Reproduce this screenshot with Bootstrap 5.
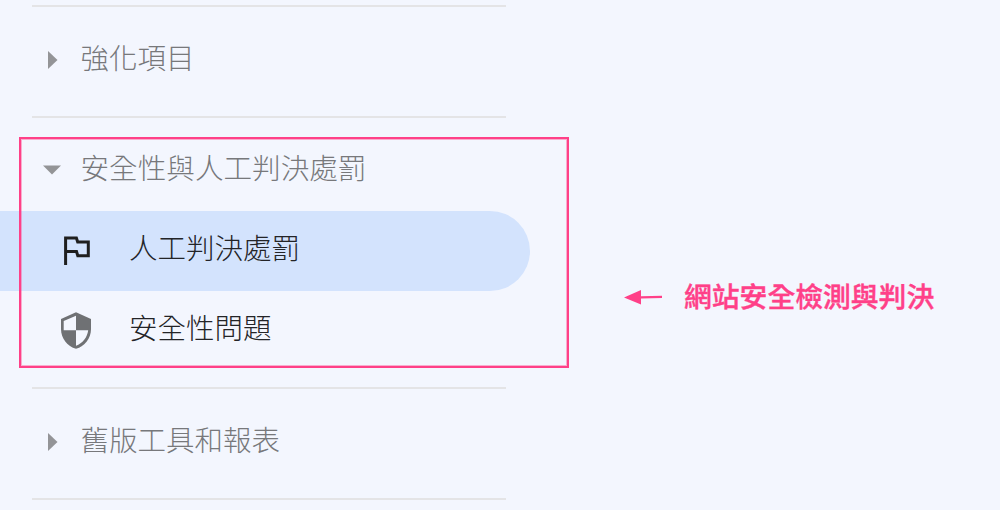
<!DOCTYPE html>
<html lang="zh-Hant">
<head>
  <meta charset="UTF-8" />
  <meta name="viewport" content="width=device-width, initial-scale=1" />
  <title>安全性與人工判決處罰</title>
  <link href="https://cdn.jsdelivr.net/npm/bootstrap@5.3.0/dist/css/bootstrap.min.css" rel="stylesheet">
  <style>
    body {
      font-family: "Noto Sans CJK TC", sans-serif;
      height: 510px;
      overflow: hidden;
      background-color: #f3f6fe;
    }

    .side-menu {
      width: 530px;
      padding-top: 5px;
      font-size: 28.5px;
      font-weight: 300;
      line-height: 42px;
    }

    .menu-divider {
      width: 474px;
      height: 2px;
      margin-left: 32px;
      background-color: #e4e4e6;
    }

    .menu-head {
      height: 109px;
      padding: 32px 0 35px 45px;
      color: #77787b;
    }

    .menu-head.is-open {
      height: 93px;
      padding: 31px 0 20px 45px;
      font-size: 28.6px;
    }

    .menu-head svg {
      width: 14px;
      height: 20px;
      margin-right: 21.5px;
      fill: #939497;
    }

    .menu-head span {
      position: relative;
      top: -3px;
    }

    .menu-link {
      height: 80px;
      padding-left: 56px;
      color: #232427;
      text-decoration: none;
    }

    .menu-link span {
      position: relative;
      top: -4px;
    }

    .menu-link svg {
      width: 40px;
      height: 40px;
      margin-right: 33px;
    }

    .menu-link.is-active {
      background-color: #d3e3fd;
      border-radius: 0 41px 41px 0;
    }

    /* highlight frame laid over the menu */
    .mark-frame {
      left: 19px;
      top: 137px;
      width: 550px;
      height: 231px;
      border: 2px solid #ff4088;
      box-shadow: inset 0 0 0 1px rgba(255, 64, 136, .4);
      pointer-events: none;
    }

    .note {
      margin: 83px 0 0 93px;
      color: #ff4088;
      font-size: 27.8px;
      font-weight: 500;
      line-height: 40px;
      -webkit-text-stroke: .4px #ff4088;
    }

    .note span {
      margin-top: -3px;
    }

    .note svg {
      width: 40px;
      height: 16px;
      margin-right: 21px;
    }
  </style>
</head>
<body>
  <div class="d-flex align-items-center position-relative h-100">
    <!-- Menu -->
    <nav class="side-menu flex-shrink-0 align-self-start">
      <div class="menu-divider"></div>
      <div class="menu-head d-flex align-items-center">
        <svg viewBox="0 0 14 20"><path d="M3 1v18l9.500-9z"/></svg>
        <span>強化項目</span>
      </div>

      <div class="menu-divider"></div>
      <div class="menu-head is-open d-flex align-items-center">
        <svg viewBox="0 0 14 20" overflow="visible"><path d="M-2 5.500h18l-9 9z"/></svg>
        <span>安全性與人工判決處罰</span>
      </div>
      <a href="#" class="menu-link is-active d-flex align-items-center">
        <svg viewBox="0 0 40 40" fill="none" stroke="#1f1f1f" stroke-width="3">
          <path d="M9.600 34V7h10.800l1.300 4h10.600v13.800H21.800l-1.300-4.300H9.600"/>
        </svg>
        <span>人工判決處罰</span>
      </a>
      <a href="#" class="menu-link d-flex align-items-center">
        <svg viewBox="0 0 40 40">
          <path d="M20 1.300L5 8v10c0 9.300 6.400 17.600 15 19.800 8.600-2.200 15-10.500 15-19.800V8z" fill="#6f7174"/>
          <path d="M20 4.700v14.600H7.700V9.900zM20 19.300h12.200c-.8 7-5.700 13.300-12.200 15.400z" fill="#f3f6fe"/>
        </svg>
        <span>安全性問題</span>
      </a>

      <div class="menu-divider mt-3"></div>
      <div class="menu-head d-flex align-items-center">
        <svg viewBox="0 0 14 20"><path d="M3 1v18l9.500-9z"/></svg>
        <span>舊版工具和報表</span>
      </div>
      <div class="menu-divider"></div>
    </nav>

    <!-- Note -->
    <div class="note d-flex align-items-center text-nowrap">
      <svg viewBox="0 0 40 16"><path d="M1 8.500L18 1v6.300l21-.6v2.400l-21 .4v6z" fill="#ff4088"/></svg>
      <span>網站安全檢測與判決</span>
    </div>

    <div class="mark-frame position-absolute"></div>
  </div>

  <script src="https://cdn.jsdelivr.net/npm/bootstrap@5.3.0/dist/js/bootstrap.bundle.min.js"></script>
</body>
</html>
